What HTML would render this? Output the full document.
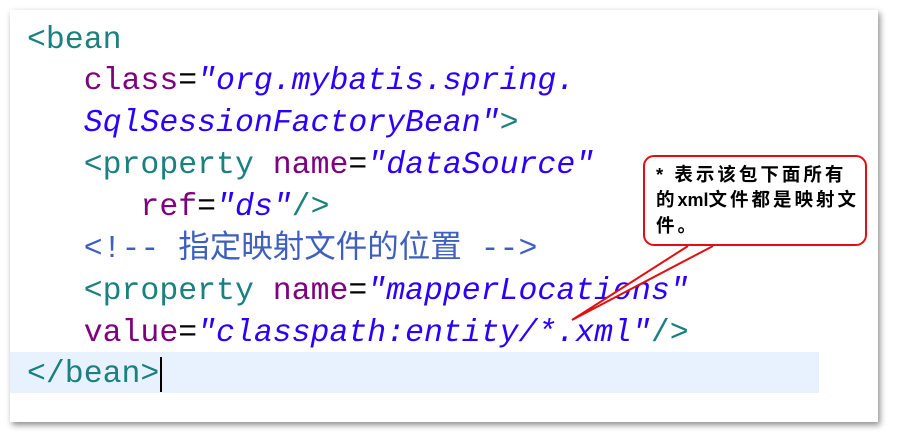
<!DOCTYPE html>
<html><head><meta charset="utf-8"><style>
body{margin:0;width:898px;height:446px;background:#fff;overflow:hidden;position:relative;font-family:"Liberation Mono","Noto Sans CJK SC",monospace}
.page{position:absolute;left:10px;top:10px;width:868px;height:412px;background:#fff;box-shadow:2px 3px 6px rgba(0,0,0,.45)}
.hl{position:absolute;left:10px;top:352px;width:809px;height:41px;background:#e8f2fe}
.l{position:absolute;left:27px;font-size:31.5px;white-space:pre;line-height:42px;height:42px}
.t{color:#1a8080}.a{color:#7f007f}.s{color:#2a00ff;font-style:italic}.c{color:#3f5fbf}.k{color:#000}
.box{position:absolute;left:643px;top:155px;width:224px;height:91px;border:2px solid #e01010;border-radius:11px;background:#fff;font:bold 18.5px/25px "Liberation Sans","Noto Sans CJK SC",sans-serif;color:#000;padding:5px 0 0 11px;box-sizing:border-box;letter-spacing:3px;white-space:nowrap}
.box b{letter-spacing:0;font-size:18px}
</style></head><body>
<div class="page"></div>
<div class="hl"></div>
<div class="l" style="top:20px"><span class="t">&lt;bean</span></div>
<div class="l" style="top:61px">   <span class="a">class</span><span class="k">=</span><span class="s">"org.mybatis.spring.</span></div>
<div class="l" style="top:103px">   <span class="s">SqlSessionFactoryBean"</span><span class="t">&gt;</span></div>
<div class="l" style="top:145px">   <span class="t">&lt;property</span> <span class="a">name</span><span class="k">=</span><span class="s">"dataSource"</span></div>
<div class="l" style="top:187px">      <span class="a">ref</span><span class="k">=</span><span class="s">"ds"</span><span class="t">/&gt;</span></div>
<div class="l" style="top:229px">   <span class="c">&lt;!-- 指定映射文件的位置 --&gt;</span></div>
<div class="l" style="top:271px">   <span class="t">&lt;property</span> <span class="a">name</span><span class="k">=</span><span class="s">"mapperLocations"</span></div>
<div class="l" style="top:313px">   <span class="a">value</span><span class="k">=</span><span class="s">"classpath:entity/*.xml"</span><span class="t">/&gt;</span></div>
<div class="l" style="top:354px"><span class="t">&lt;/bean&gt;</span><span style="border-left:2px solid #000;margin-left:1px"></span></div>
<svg style="position:absolute;left:0;top:0" width="898" height="446"><path d="M688,246 L572,320 L713,246" fill="#fff" stroke="#e01010" stroke-width="2"/></svg>
<div class="box">* 表示该包下面所有<br>的<b>xml</b>文件都是映射文<br>件。</div>
</body></html>
